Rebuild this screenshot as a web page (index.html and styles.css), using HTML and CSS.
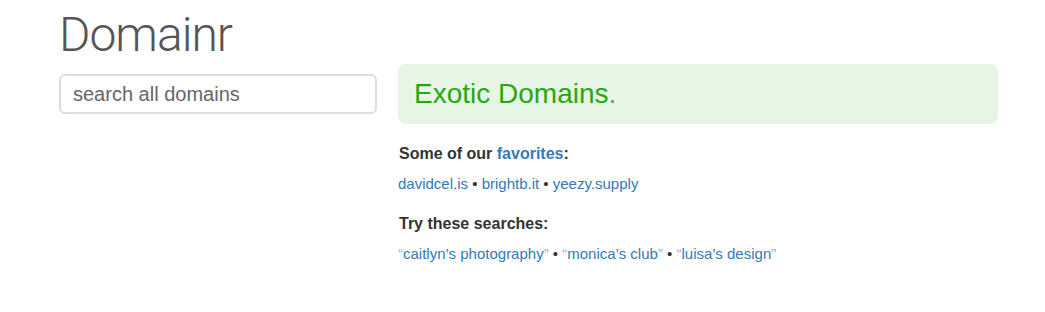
FILE: index.html
```html
<!DOCTYPE html>
<html lang="en">
<head>
  <meta charset="UTF-8" />
  <title>Domainr</title>
  <link rel="stylesheet" href="styles.css">
</head>
<body>

  <div class="page">
    <!-- Left column -->
    <div class="sidebar">
      <h1 class="brand">Domainr</h1>
      <input type="text" class="search" placeholder="search all domains" />
    </div>

    <!-- Main column -->
    <div class="main">
      <div class="banner">Exotic Domains<span class="dot">.</span></div>

      <h4 class="label">Some of our <a href="#">favorites</a>:</h4>
      <p class="links">
        <a href="#">davidcel.is</a> &bull; <a href="#">brightb.it</a> &bull; <a href="#">yeezy.supply</a>
      </p>

      <h4 class="label">Try these searches:</h4>
      <p class="links">
        <a href="#"><span class="q">&ldquo;</span>caitlyn&rsquo;s photography<span class="q">&rdquo;</span></a> &bull;
        <a href="#"><span class="q">&ldquo;</span>monica&rsquo;s club<span class="q">&rdquo;</span></a> &bull;
        <a href="#"><span class="q">&ldquo;</span>luisa&rsquo;s design<span class="q">&rdquo;</span></a>
      </p>
    </div>
  </div>

</body>
</html>
```

FILE: styles.css
```css
body {
  margin: 0;
  font-family: "Liberation Sans", Arial, sans-serif;
  color: #333;
  background: #fff;
}

a {
  color: #337ab7;
  text-decoration: none;
}

.page {
  display: flex;
  padding-left: 59px;
  gap: 21px;
}

.sidebar {
  width: 318px;
}

.brand {
  margin: 7px 0 0 0;
  font-family: Roboto, "Liberation Sans", sans-serif;
  font-size: 48px;
  font-weight: 300;
  color: #555;
  line-height: 56px;
  letter-spacing: -1px;
}

.search {
  display: block;
  box-sizing: border-box;
  width: 318px;
  height: 40px;
  margin-top: 11px;
  padding: 0 12px;
  border: 2px solid #ddd;
  border-radius: 6px;
  font-family: "Liberation Sans", Arial, sans-serif;
  font-size: 20px;
  color: #555;
}

.search::placeholder {
  color: #666;
}

.main {
  width: 600px;
  padding-top: 64px;
}

.banner {
  height: 60px;
  box-sizing: border-box;
  padding: 10px 16px 0;
  background-color: #e7f5e4;
  border-radius: 8px;
  color: #27a812;
  font-size: 28px;
  line-height: 40px;
}

.banner .dot {
  color: #6c9c74;
}

.label {
  margin: 21px 0 0 1px;
  font-size: 16px;
  font-weight: bold;
  line-height: 18px;
  color: #333;
}

.links {
  margin: 12px 0 0 0;
  font-size: 15px;
  line-height: 18px;
  color: #333;
}

.links .q {
  color: #8fb3d6;
}

.links + .label {
  margin-top: 22px;
}
```
